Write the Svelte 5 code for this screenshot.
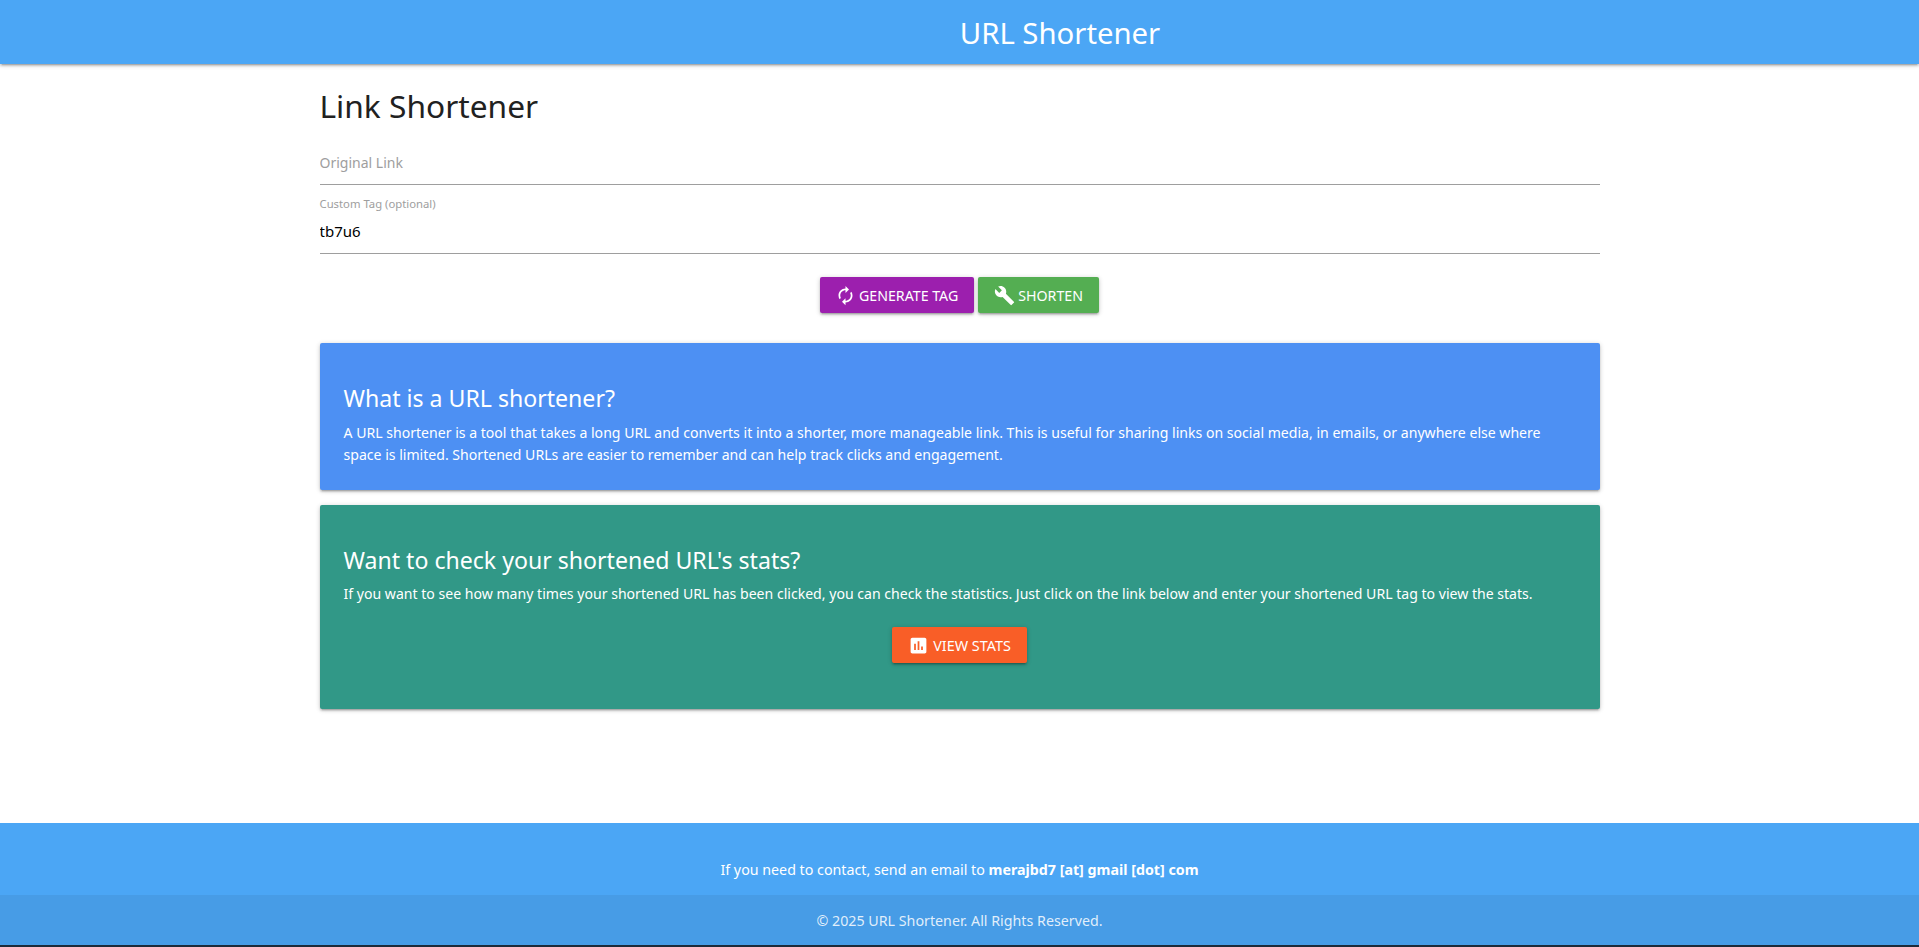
<script>
  let link = $state("");
  let tag = $state("tb7u6");
</script>

<div class="page">
  <header>URL Shortener</header>

  <main>
    <h1>Link Shortener</h1>

    <div class="field">
      <input bind:value={link} placeholder="Original Link" aria-label="Original Link" />
    </div>
    <div class="field tagged">
      <label for="tag">Custom Tag (optional)</label>
      <input id="tag" bind:value={tag} />
    </div>

    <div class="actions">
      <button class="purple">
        <svg viewBox="0 0 24 24"><path d="M12 6v3l4-4-4-4v3c-4.42 0-8 3.58-8 8 0 1.57.46 3.03 1.24 4.26L6.7 14.8c-.45-.83-.7-1.79-.7-2.8 0-3.31 2.69-6 6-6zm6.76 1.74L17.3 9.2c.44.84.7 1.79.7 2.8 0 3.31-2.69 6-6 6v-3l-4 4 4 4v-3c4.42 0 8-3.58 8-8 0-1.57-.46-3.03-1.24-4.26z" /></svg>
        Generate Tag
      </button>
      <button class="green">
        <svg viewBox="0 0 24 24"><path d="M22.7 19l-9.1-9.1c.9-2.3.4-5-1.5-6.9-2-2-5-2.4-7.4-1.3L9 6 6 9 1.6 4.7C.4 7.1.9 10.1 2.9 12.1c1.9 1.9 4.6 2.4 6.9 1.5l9.1 9.1c.4.4 1 .4 1.4 0l2.3-2.3c.5-.4.5-1.1.1-1.4z" /></svg>
        Shorten
      </button>
    </div>

    <section class="card blue">
      <h2>What is a URL shortener?</h2>
      <p>A URL shortener is a tool that takes a long URL and converts it into a shorter, more manageable link. This is useful for sharing links on social media, in emails, or anywhere else where space is limited. Shortened URLs are easier to remember and can help track clicks and engagement.</p>
    </section>

    <section class="card teal">
      <h2>Want to check your shortened URL's stats?</h2>
      <p>If you want to see how many times your shortened URL has been clicked, you can check the statistics. Just click on the link below and enter your shortened URL tag to view the stats.</p>
      <div class="actions stats">
        <button class="orange">
          <svg viewBox="0 0 24 24"><path d="M19 3H5c-1.1 0-2 .9-2 2v14c0 1.1.9 2 2 2h14c1.1 0 2-.9 2-2V5c0-1.1-.9-2-2-2zM9 17H7v-7h2v7zm4 0h-2V7h2v10zm4 0h-2v-4h2v4z" /></svg>
          View Stats
        </button>
      </div>
    </section>
  </main>

  <footer>
    <div class="contact">If you need to contact, send an email to <b>merajbd7 [at] gmail [dot] com</b></div>
    <div class="copyright">© 2025 URL Shortener. All Rights Reserved.</div>
  </footer>
</div>

<style>
  :global(body) {
    margin: 0;
    background: #1d2b3a;
    font-family: "Noto Sans", "Open Sans", sans-serif;
  }
  .page {
    display: flex;
    flex-direction: column;
    height: 945px;
    background: #fff;
    overflow: hidden;
  }
  header {
    height: 64px;
    line-height: 67px;
    padding-left: 201px;
    text-align: center;
    font-size: 29.3px;
    color: #fff;
    background: #4ba6f5;
    box-shadow: 0 2px 2px 0 rgba(0, 0, 0, 0.14), 0 3px 1px -2px rgba(0, 0, 0, 0.12), 0 1px 5px 0 rgba(0, 0, 0, 0.2);
  }
  main {
    flex: 1;
    width: 1280px;
    margin: 0 auto;
  }
  h1 {
    margin: 19px 0 0;
    font-size: 31.7px;
    font-weight: 400;
    line-height: 46px;
    color: #212121;
  }
  .field {
    margin-top: 8px;
  }
  .field input {
    display: block;
    width: 100%;
    height: 48px;
    padding: 4px 0 0;
    border: 0;
    border-bottom: 1px solid #9e9e9e;
    outline: 0;
    box-sizing: border-box;
    font: inherit;
    font-size: 14px;
    color: #000;
  }
  .field input::placeholder {
    color: #9e9e9e;
  }
  .tagged {
    position: relative;
    margin-top: 21px;
  }
  .tagged input {
    padding-top: 2px;
    font-size: 15px;
  }
  .tagged label {
    position: absolute;
    top: -10px;
    left: 0;
    font-size: 11.3px;
    line-height: 16px;
    color: #9e9e9e;
  }
  .actions {
    display: flex;
    justify-content: center;
    gap: 4px;
    margin-top: 23px;
  }
  button {
    display: inline-flex;
    align-items: center;
    gap: 3px;
    height: 36px;
    padding: 0 16px;
    border: 0;
    border-radius: 2px;
    font: inherit;
    font-size: 14.2px;
    text-transform: uppercase;
    color: #fff;
    box-shadow: 0 2px 2px 0 rgba(0, 0, 0, 0.14), 0 3px 1px -2px rgba(0, 0, 0, 0.12), 0 1px 5px 0 rgba(0, 0, 0, 0.2);
  }
  button svg {
    width: 21px;
    height: 21px;
    fill: currentColor;
  }
  .purple { background: #9c1fae; padding: 0 16px 0 15px; }
  .green { background: #54ae52; }
  .orange { background: #f95e27; gap: 4px; font-size: 14.4px; }
  .card {
    margin-top: 15px;
    padding: 24px;
    border-radius: 2px;
    color: #fff;
    box-shadow: 0 2px 2px 0 rgba(0, 0, 0, 0.14), 0 3px 1px -2px rgba(0, 0, 0, 0.12), 0 1px 5px 0 rgba(0, 0, 0, 0.2);
  }
  .card.blue {
    margin-top: 30px;
    background: #4d90f3;
  }
  .card.teal {
    background: #319887;
  }
  h2 {
    margin: 15px 0 0;
    font-size: 23.1px;
    font-weight: 400;
    line-height: 32px;
  }
  p {
    margin: 7px 0 0;
    font-size: 14.08px;
    line-height: 22px;
  }
  .blue p {
    margin-top: 8px;
  }
  .stats {
    margin: 22px 0 22px;
  }
  footer {
    color: #fff;
    text-align: center;
    font-size: 14.25px;
  }
  .contact {
    height: 72px;
    box-sizing: border-box;
    padding-top: 36px;
    line-height: 21px;
    background: #4ba6f5;
  }
  .copyright {
    height: 50px;
    line-height: 51px;
    color: rgba(255, 255, 255, 0.85);
    background: #479ce6;
  }
</style>
